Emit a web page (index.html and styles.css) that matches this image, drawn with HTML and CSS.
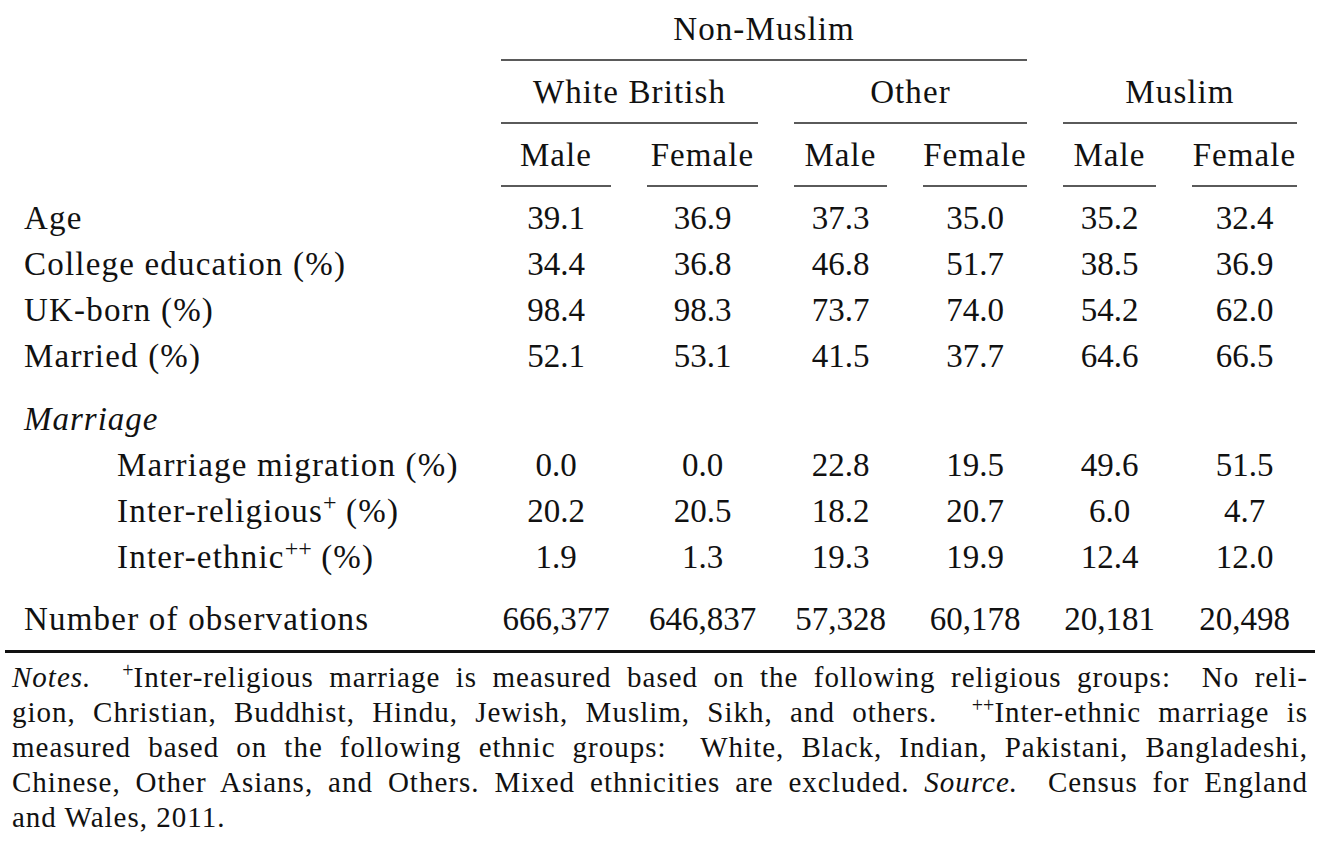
FILE: index.html
```html
<!DOCTYPE html>
<html lang="en">
<head>
<meta charset="utf-8">
<title>Descriptive statistics</title>
<link rel="stylesheet" href="styles.css">
</head>
<body>
<div class="page">
  <div class="table">
    <div class="lab"></div>
    <div class="hd span4"><div class="hd-text">Non-Muslim</div><div class="cmid"></div></div>

    <div class="lab"></div>
    <div class="hd span2"><div class="hd-text">White British</div><div class="cmid"></div></div>
    <div class="hd span2"><div class="hd-text">Other</div><div class="cmid"></div></div>
    <div class="hd span2"><div class="hd-text">Muslim</div><div class="cmid"></div></div>

    <div class="lab"></div>
    <div class="hd"><div class="hd-text">Male</div><div class="cmid"></div></div>
    <div class="hd"><div class="hd-text">Female</div><div class="cmid"></div></div>
    <div class="hd"><div class="hd-text">Male</div><div class="cmid"></div></div>
    <div class="hd"><div class="hd-text">Female</div><div class="cmid"></div></div>
    <div class="hd"><div class="hd-text">Male</div><div class="cmid"></div></div>
    <div class="hd"><div class="hd-text">Female</div><div class="cmid"></div></div>

    <div class="lab">Age</div>
    <div class="num">39.1</div><div class="num">36.9</div><div class="num">37.3</div><div class="num">35.0</div><div class="num">35.2</div><div class="num">32.4</div>

    <div class="lab">College education (%)</div>
    <div class="num">34.4</div><div class="num">36.8</div><div class="num">46.8</div><div class="num">51.7</div><div class="num">38.5</div><div class="num">36.9</div>

    <div class="lab">UK-born (%)</div>
    <div class="num">98.4</div><div class="num">98.3</div><div class="num">73.7</div><div class="num">74.0</div><div class="num">54.2</div><div class="num">62.0</div>

    <div class="lab">Married (%)</div>
    <div class="num">52.1</div><div class="num">53.1</div><div class="num">41.5</div><div class="num">37.7</div><div class="num">64.6</div><div class="num">66.5</div>

    <div class="lab sect"><em>Marriage</em></div>

    <div class="lab sub">Marriage migration (%)</div>
    <div class="num">0.0</div><div class="num">0.0</div><div class="num">22.8</div><div class="num">19.5</div><div class="num">49.6</div><div class="num">51.5</div>

    <div class="lab sub">Inter-religious<sup class="sup">+</sup> (%)</div>
    <div class="num">20.2</div><div class="num">20.5</div><div class="num">18.2</div><div class="num">20.7</div><div class="num">6.0</div><div class="num">4.7</div>

    <div class="lab sub">Inter-ethnic<sup class="sup">++</sup> (%)</div>
    <div class="num">1.9</div><div class="num">1.3</div><div class="num">19.3</div><div class="num">19.9</div><div class="num">12.4</div><div class="num">12.0</div>

    <div class="lab sep">Number of observations</div>
    <div class="num">666,377</div><div class="num">646,837</div><div class="num">57,328</div><div class="num">60,178</div><div class="num">20,181</div><div class="num">20,498</div>
  </div>
  <div class="bottomrule"></div>
  <div class="notes">
    <span class="line"><em>Notes.</em>&nbsp; <sup class="nsup">+</sup>Inter-religious marriage is measured based on the following religious groups:&nbsp; No reli-</span>
    <span class="line">gion, Christian, Buddhist, Hindu, Jewish, Muslim, Sikh, and others.&nbsp; <sup class="nsup">++</sup>Inter-ethnic marriage is</span>
    <span class="line">measured based on the following ethnic groups:&nbsp; White, Black, Indian, Pakistani, Bangladeshi,</span>
    <span class="line">Chinese, Other Asians, and Others. Mixed ethnicities are excluded. <em>Source.</em>&nbsp; Census for England</span>
    <span class="line last">and Wales, 2011.</span>
  </div>
</div>
</body>
</html>
```

FILE: styles.css
```css
html, body {
  margin: 0;
  padding: 0;
  background: #ffffff;
}

body {
  font-family: "Liberation Serif", "Times New Roman", serif;
  color: #111111;
}

.page {
  width: 1310px;
  margin-left: 5px;
  padding-top: 6px;
}

.table {
  display: grid;
  grid-template-columns: 478px 146px 147px 129px 140px 129px 141px;
  align-items: end;
  font-size: 33px;
  line-height: 46px;
}

.lab {
  grid-column: 1;
  padding-left: 19px;
  letter-spacing: 1.2px;
  white-space: nowrap;
}

.lab.sub {
  padding-left: 112px;
}

.lab.sect {
  padding-top: 17px;
}

.lab.sep {
  padding-top: 16px;
}

.lab em {
  font-style: italic;
  letter-spacing: 1px;
}

.hd {
  text-align: center;
}

.hd.span4 {
  grid-column: 2 / span 4;
}

.hd.span2 {
  grid-column: span 2;
}

.hd-text {
  line-height: 46px;
  letter-spacing: 1.1px;
  white-space: nowrap;
}

.cmid {
  height: 2px;
  background: #5a5a5a;
  margin: 7px 18px 8px;
}

.num {
  text-align: center;
  white-space: nowrap;
}

.sup {
  font-size: 24px;
  line-height: 0;
  vertical-align: 12px;
  letter-spacing: 0;
}

.bottomrule {
  height: 3px;
  background: #111111;
  margin-top: 8px;
}

.notes {
  padding: 7px 7px 0 7px;
  font-size: 29px;
  line-height: 35px;
  letter-spacing: 1px;
}

.line {
  display: block;
  text-align: justify;
  text-align-last: justify;
  white-space: nowrap;
}

.line.last {
  text-align-last: left;
}

.nsup {
  font-size: 20px;
  line-height: 0;
  vertical-align: 10px;
  letter-spacing: 0;
}

.notes em {
  font-style: italic;
}
```
